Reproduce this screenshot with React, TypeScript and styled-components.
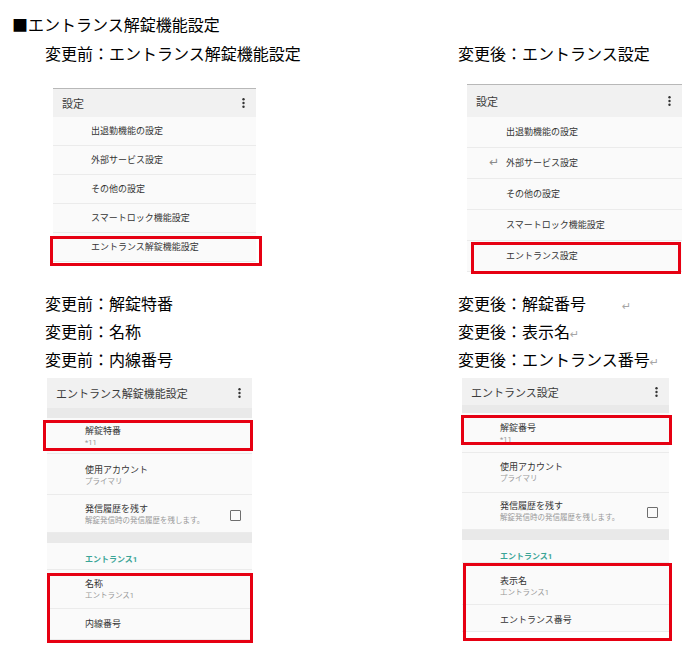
import React from 'react';
import styled, { createGlobalStyle } from 'styled-components';

const GlobalStyle = createGlobalStyle`
  html, body {
    margin: 0;
    padding: 0;
    background: #ffffff;
  }
  body {
    font-family: "Noto Sans CJK JP", sans-serif;
    color: #000;
  }
`;

const Page = styled.div`
  width: 695px;
  height: 652px;
  box-sizing: border-box;
  padding: 14px 0 0 12px;
  overflow: hidden;
`;

const Title = styled.div`
  font-size: 16px;
  line-height: 20px;
  white-space: nowrap;
`;

const Grid = styled.div`
  margin: 9px 0 0 33px;
  display: grid;
  grid-template-columns: 413px 1fr;
  grid-template-rows: 246px auto;
`;

const Column = styled.div`
  display: flex;
  flex-direction: column;
  align-items: flex-start;
`;

const Label = styled.div<{ $lh?: number }>`
  height: ${({ $lh }) => $lh ?? 20}px;
  font-size: 16px;
  line-height: ${({ $lh }) => $lh ?? 20}px;
  white-space: nowrap;
`;

const Mark = styled.span<{ $gap?: number }>`
  display: inline-block;
  color: #a6a6a6;
  font-family: "DejaVu Sans", sans-serif;
  font-size: 11px;
  line-height: 0;
  margin-left: ${({ $gap }) => $gap ?? 0}px;
`;

const Panel = styled.div<{ $top: number; $left: number; $width: number; $border?: boolean }>`
  margin-top: ${({ $top }) => $top}px;
  margin-left: ${({ $left }) => $left}px;
  width: ${({ $width }) => $width}px;
  background: #fafafa;
  border-top: ${({ $border }) => ($border ? '1px solid #b8b8b8' : 'none')};
  font-family: Roboto, "Noto Sans CJK JP", sans-serif;
`;

const Header = styled.div<{ $h: number }>`
  height: ${({ $h }) => $h}px;
  box-sizing: border-box;
  display: flex;
  align-items: center;
  justify-content: space-between;
  padding: 0 11px 0 9px;
  background: #f1f1f1;
  color: #3c3c3c;
  font-size: 11px;
`;

const Band = styled.div<{ $h: number }>`
  height: ${({ $h }) => $h}px;
  background: #e9e9e9;
`;

const Row = styled.div<{ $h: number; $indent?: number; $pad?: number; $bottom?: boolean }>`
  height: ${({ $h }) => $h}px;
  box-sizing: border-box;
  display: flex;
  align-items: ${({ $bottom }) => ($bottom ? 'flex-end' : 'center')};
  justify-content: space-between;
  padding: ${({ $pad }) => $pad ?? 0}px 11px 0 ${({ $indent }) => $indent ?? 38}px;
  border-bottom: 1px solid #ebebeb;
  color: #343434;
  font-size: 9px;
  line-height: 11px;
`;

const TextBlock = styled.div`
  display: flex;
  flex-direction: column;
`;

const Primary = styled.span`
  color: #343434;
  font-size: 9px;
  line-height: 11px;
  white-space: nowrap;
`;

const Secondary = styled.span`
  color: #999999;
  font-size: 7.5px;
  line-height: 11px;
  white-space: nowrap;
`;

const Category = styled.span<{ $down: number }>`
  color: #3aa597;
  font-size: 8px;
  font-weight: 700;
  line-height: 11px;
  margin-bottom: ${({ $down }) => $down}px;
`;

const RowMark = styled.span`
  display: inline-block;
  width: 17px;
  color: #8a8a8a;
  font-family: "DejaVu Sans", sans-serif;
  font-size: 12px;
  line-height: 0;
`;

const Checkbox = styled.span`
  width: 9px;
  height: 9px;
  border: 1.5px solid #6e6e6e;
  border-radius: 1px;
  flex-shrink: 0;
`;

const Marked = styled.div<{ $t: number; $b: number; $l: number; $r: number }>`
  position: relative;
  &::after {
    content: '';
    position: absolute;
    top: ${({ $t }) => $t}px;
    bottom: ${({ $b }) => $b}px;
    left: ${({ $l }) => $l}px;
    right: ${({ $r }) => $r}px;
    border: 3px solid #e60012;
    pointer-events: none;
  }
`;

const Kebab: React.FC = () => (
  <svg width="3" height="10" viewBox="0 0 3 10">
    <circle cx="1.5" cy="1.3" r="1.2" fill="#333" />
    <circle cx="1.5" cy="5" r="1.2" fill="#333" />
    <circle cx="1.5" cy="8.7" r="1.2" fill="#333" />
  </svg>
);

const App: React.FC = () => {
  return (
    <>
      <GlobalStyle />
      <Page>
        <Title>■エントランス解錠機能設定</Title>
        <Grid>
          <Column>
            <Label>変更前：エントランス解錠機能設定</Label>
            <Panel $top={25} $left={8} $width={203} $border>
              <Header $h={28}>
                設定
                <Kebab />
              </Header>
              <Row $h={29}>出退勤機能の設定</Row>
              <Row $h={29}>外部サービス設定</Row>
              <Row $h={29}>その他の設定</Row>
              <Row $h={29}>スマートロック機能設定</Row>
              <Marked $t={3} $b={-4} $l={-3} $r={-6}>
                <Row $h={29}>エントランス解錠機能設定</Row>
              </Marked>
            </Panel>
          </Column>

          <Column>
            <Label>変更後：エントランス設定</Label>
            <Panel $top={21} $left={9} $width={215} $border>
              <Header $h={32}>
                設定
                <Kebab />
              </Header>
              <Row $h={31} $indent={39}>出退勤機能の設定</Row>
              <Row $h={31} $indent={22}>
                <span>
                  <RowMark>↵</RowMark>外部サービス設定
                </span>
              </Row>
              <Row $h={31} $indent={39}>その他の設定</Row>
              <Row $h={31} $indent={39}>スマートロック機能設定</Row>
              <Marked $t={1} $b={-2} $l={4} $r={1}>
                <Row $h={31} $indent={39}>エントランス設定</Row>
              </Marked>
            </Panel>
          </Column>

          <Column>
            <Label $lh={28}>変更前：解錠特番</Label>
            <Label $lh={28}>変更前：名称</Label>
            <Label $lh={28}>変更前：内線番号</Label>
            <Panel $top={5} $left={2} $width={205}>
              <Header $h={30}>
                エントランス解錠機能設定
                <Kebab />
              </Header>
              <Band $h={10} />
              <Marked $t={2} $b={3} $l={-4} $r={-1}>
                <Row $h={36} $pad={3}>
                  <TextBlock>
                    <Primary>解錠特番</Primary>
                    <Secondary>*11</Secondary>
                  </TextBlock>
                </Row>
              </Marked>
              <Row $h={41} $pad={4}>
                <TextBlock>
                  <Primary>使用アカウント</Primary>
                  <Secondary>プライマリ</Secondary>
                </TextBlock>
              </Row>
              <Row $h={38} $pad={3}>
                <TextBlock>
                  <Primary>発信履歴を残す</Primary>
                  <Secondary>解錠発信時の発信履歴を残します。</Secondary>
                </TextBlock>
                <Checkbox />
              </Row>
              <Band $h={10} />
              <Row $h={27} $bottom>
                <Category $down={4}>エントランス1</Category>
              </Row>
              <Marked $t={3} $b={-3} $l={0} $r={-1}>
                <Row $h={39} $pad={2}>
                  <TextBlock>
                    <Primary>名称</Primary>
                    <Secondary>エントランス1</Secondary>
                  </TextBlock>
                </Row>
                <Row $h={31}>
                  <Primary>内線番号</Primary>
                </Row>
              </Marked>
            </Panel>
          </Column>

          <Column>
            <Label $lh={28}>
              変更後：解錠番号<Mark $gap={36}>↵</Mark>
            </Label>
            <Label $lh={28}>
              変更後：表示名<Mark>↵</Mark>
            </Label>
            <Label $lh={28}>
              変更後：エントランス番号<Mark>↵</Mark>
            </Label>
            <Panel $top={5} $left={4} $width={207}>
              <Header $h={27}>
                エントランス設定
                <Kebab />
              </Header>
              <Band $h={8} />
              <Marked $t={2} $b={8} $l={-1} $r={-3}>
                <Row $h={40} $pad={2}>
                  <TextBlock>
                    <Primary>解錠番号</Primary>
                    <Secondary>*11</Secondary>
                  </TextBlock>
                </Row>
              </Marked>
              <Row $h={40}>
                <TextBlock>
                  <Primary>使用アカウント</Primary>
                  <Secondary>プライマリ</Secondary>
                </TextBlock>
              </Row>
              <Row $h={37} $pad={2}>
                <TextBlock>
                  <Primary>発信履歴を残す</Primary>
                  <Secondary>解錠発信時の発信履歴を残します。</Secondary>
                </TextBlock>
                <Checkbox />
              </Row>
              <Band $h={10} />
              <Row $h={23} $bottom>
                <Category $down={0}>エントランス1</Category>
              </Row>
              <Marked $t={0} $b={-9} $l={1} $r={-3}>
                <Row $h={42} $pad={6}>
                  <TextBlock>
                    <Primary>表示名</Primary>
                    <Secondary>エントランス1</Secondary>
                  </TextBlock>
                </Row>
                <Row $h={27} $pad={5}>
                  <Primary>エントランス番号</Primary>
                </Row>
              </Marked>
            </Panel>
          </Column>
        </Grid>
      </Page>
    </>
  );
};

export default App;
